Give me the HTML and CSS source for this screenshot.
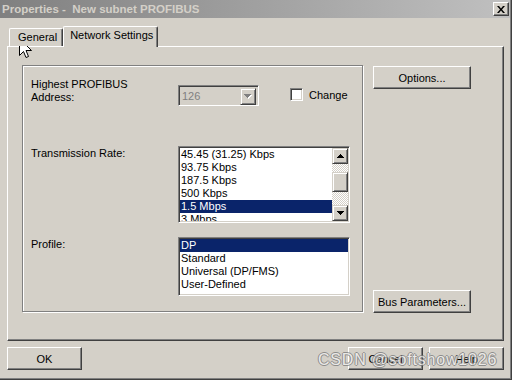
FILE: index.html
```html
<!DOCTYPE html>
<html lang="en">
<head>
    <meta charset="UTF-8">
    <title>Properties - New subnet PROFIBUS</title>
    <link rel="stylesheet" href="styles.css">
</head>
<body>
    <div class="window">
        <div class="titlebar">
            <span class="title">Properties -&nbsp; New subnet PROFIBUS</span>
            <button class="close" type="button">
                <svg width="8" height="7" viewBox="0 0 8 7"><path d="M0 0h2l2 2.5L6 0h2L5 3.5 8 7H6L4 4.5 2 7H0l3-3.5z" fill="#000"/></svg>
            </button>
        </div>

        <div class="tabs">
            <div class="tab">General</div>
            <div class="tab active">Network Settings</div>
        </div>

        <div class="panel">
            <div class="group">
                <div class="row row-address">
                    <div class="label">Highest PROFIBUS<br>Address:</div>
                    <div class="combo">
                        <span class="combo-value">126</span>
                        <span class="combo-btn">
                            <svg width="8" height="5" viewBox="0 0 8 5"><path d="M1 1h7v1H7v1H6v1H5v1H4V4H3V3H2V2H1z" fill="#fff"/><path d="M0 0h7v1H6v1H5v1H4v1H3V3H2V2H1V1H0z" fill="#808080"/></svg>
                        </span>
                    </div>
                    <label class="check"><span class="box"></span>Change</label>
                </div>

                <div class="row row-rate">
                    <div class="label">Transmission Rate:</div>
                    <div class="listbox rate-list">
                        <ul class="items">
                            <li>45.45 (31.25) Kbps</li>
                            <li>93.75 Kbps</li>
                            <li>187.5 Kbps</li>
                            <li>500 Kbps</li>
                            <li class="selected">1.5 Mbps</li>
                            <li>3 Mbps</li>
                        </ul>
                        <div class="scrollbar">
                            <span class="sb-btn"><svg width="7" height="4" viewBox="0 0 7 4"><path d="M3 0h1v1h1v1h1v1h1v1H0V3h1V2h1V1h1z"/></svg></span>
                            <span class="sb-track top"></span>
                            <span class="sb-thumb"></span>
                            <span class="sb-track bottom"></span>
                            <span class="sb-btn"><svg width="7" height="4" viewBox="0 0 7 4"><path d="M0 0h7v1H6v1H5v1H4v1H3V3H2V2H1V1H0z"/></svg></span>
                        </div>
                    </div>
                </div>

                <div class="row row-profile">
                    <div class="label">Profile:</div>
                    <div class="listbox profile-list">
                        <ul class="items">
                            <li class="selected">DP</li>
                            <li>Standard</li>
                            <li>Universal (DP/FMS)</li>
                            <li>User-Defined</li>
                        </ul>
                    </div>
                </div>
            </div>

            <div class="side">
                <button class="btn" type="button">Options...</button>
                <button class="btn" type="button">Bus Parameters...</button>
            </div>
        </div>

        <div class="footer">
            <button class="btn btn-small" type="button">OK</button>
            <div class="spacer"></div>
            <button class="btn btn-small" type="button">Cancel</button>
            <button class="btn btn-small" type="button">Help</button>
        </div>

        <div class="watermark">CSDN @softshow1026</div>

        <svg class="cursor" width="13" height="21" viewBox="0 0 13 21">
            <path d="M0.5 0.5V17.5L4.5 13.5L7 19.5L9.5 18.5L7 12.5H12.5Z" fill="#fff" stroke="#000" stroke-width="1" stroke-linejoin="miter"/>
        </svg>
    </div>
</body>
</html>
```

FILE: styles.css
```css
* {
    box-sizing: border-box;
}
body {
    margin: 0;
    background: #d4d0c8;
    font-family: "Liberation Sans", Arial, sans-serif;
    font-size: 11px;
    color: #000;
}
.window {
    position: relative;
    width: 512px;
    height: 380px;
    background: #d4d0c8;
    border-right: 1px solid #404040;
    border-bottom: 1px solid #404040;
    box-shadow: inset -1px -1px #808080;
}
.titlebar {
    display: flex;
    align-items: center;
    height: 18px;
    width: 510px;
    padding-left: 2px;
    background: linear-gradient(to right, #808080, #c0c0c0);
}
.title {
    flex: 1;
    color: #d4d0c8;
    font-weight: bold;
    font-size: 11.5px;
    white-space: pre;
}
.close {
    display: flex;
    align-items: center;
    justify-content: center;
    width: 16px;
    height: 14px;
    margin-right: 1px;
    padding: 0;
    background: #d4d0c8;
    border: 1px solid;
    border-color: #fff #404040 #404040 #fff;
    box-shadow: inset -1px -1px #808080;
}

/* tabs */
.tabs {
    display: flex;
    align-items: flex-end;
    height: 20px;
    margin: 8px 0 0 9px;
    position: relative;
    z-index: 1;
}
.tab {
    height: 18px;
    padding: 2px 5px 0 8px;
    border: 1px solid #fff;
    border-bottom: none;
    border-right: 1px solid #404040;
    box-shadow: inset -1px 0 #808080;
    border-radius: 2px 2px 0 0;
    background: #d4d0c8;
}
.tab.active {
    height: 21px;
    margin-bottom: -1px;
    padding: 2px 4px 0 6px;
}

/* tab page */
.panel {
    display: flex;
    width: 497px;
    height: 295px;
    margin-left: 7px;
    border: 1px solid;
    border-color: #fff #404040 #404040 #fff;
    box-shadow: inset -1px -1px #808080;
}
.group {
    width: 341px;
    height: 247px;
    margin: 18px 0 0 14px;
    padding: 12px 0 0 8px;
    border: 1px solid #808080;
    box-shadow: inset 1px 1px #fff, 1px 1px #fff;
}
.row {
    display: flex;
    align-items: flex-start;
}
.label {
    width: 147px;
    line-height: 13px;
}
.row-rate {
    margin-top: 40px;
}
.row-profile {
    margin-top: 14px;
}
.row-rate .label,
.row-profile .label {
    margin-top: 1px;
}

/* sunken controls */
.combo,
.listbox,
.box {
    border: 1px solid;
    border-color: #808080 #fff #fff #808080;
    box-shadow: inset 1px 1px #404040, inset -1px -1px #d4d0c8;
}
.combo {
    display: flex;
    width: 81px;
    height: 21px;
    margin-top: 7px;
    padding: 2px;
    background: #d4d0c8;
}
.combo-value {
    flex: 1;
    padding: 2px 0 0 1px;
    color: #808080;
    line-height: 13px;
}
.combo-btn {
    display: flex;
    align-items: center;
    justify-content: center;
    width: 16px;
    height: 17px;
    border: 1px solid;
    border-color: #d4d0c8 #404040 #404040 #d4d0c8;
    box-shadow: inset 1px 1px #fff, inset -1px -1px #808080;
}
.check {
    display: flex;
    align-items: center;
    margin: 10px 0 0 31px;
}
.box {
    width: 13px;
    height: 13px;
    margin-right: 6px;
    background: #fff;
}

/* list boxes */
.listbox {
    display: flex;
    width: 172px;
    padding: 1px;
    background: #fff;
    overflow: hidden;
}
.rate-list {
    height: 77px;
}
.profile-list {
    height: 59px;
}
.items {
    flex: 1;
    margin: 0;
    padding: 0;
    list-style: none;
    overflow: hidden;
}
.items li {
    height: 13px;
    padding-left: 1px;
    line-height: 13px;
    white-space: nowrap;
}
.items li.selected {
    background: #0a246a;
    color: #fff;
}
.scrollbar {
    display: flex;
    flex-direction: column;
    width: 16px;
}
.sb-btn,
.sb-thumb {
    display: flex;
    align-items: center;
    justify-content: center;
    height: 16px;
    border: 1px solid;
    border-color: #d4d0c8 #404040 #404040 #d4d0c8;
    box-shadow: inset 1px 1px #fff, inset -1px -1px #808080;
    background: #d4d0c8;
}
.sb-thumb {
    height: 20px;
}
.sb-track {
    background: repeating-conic-gradient(#fff 0 25%, #d4d0c8 0 50%) 0 0 / 2px 2px;
}
.sb-track.top {
    height: 8px;
}
.sb-track.bottom {
    flex: 1;
}

/* buttons */
.side {
    display: flex;
    flex-direction: column;
    justify-content: space-between;
    height: 247px;
    margin: 19px 0 0 10px;
}
.btn {
    width: 98px;
    height: 23px;
    padding: 0;
    font-family: inherit;
    font-size: 11px;
    color: #000;
    background: #d4d0c8;
    border: 1px solid;
    border-color: #fff #404040 #404040 #fff;
    box-shadow: inset -1px -1px #808080;
}
.btn-small {
    width: 75px;
}
.footer {
    display: flex;
    gap: 6px;
    width: 497px;
    margin: 6px 0 0 7px;
}
.spacer {
    flex: 1;
}

/* overlays */
.watermark {
    position: absolute;
    left: 318px;
    top: 351px;
    font-size: 16px;
    letter-spacing: 0.8px;
    color: #f2f2f2;
    text-shadow: -1px 0 #777, 1px 0 #777, 0 -1px #777, 0 1px #777;
    opacity: 0.75;
    pointer-events: none;
}
.cursor {
    position: absolute;
    left: 19px;
    top: 38px;
}
```
